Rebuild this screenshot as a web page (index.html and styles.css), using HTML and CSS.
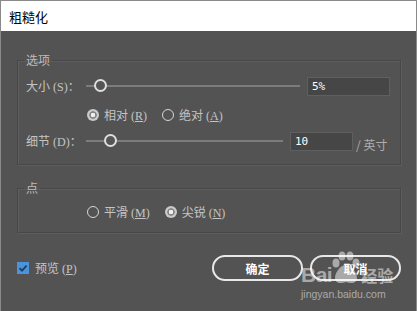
FILE: index.html
```html
<!DOCTYPE html>
<html>
    <head>
        <meta charset="utf-8">
        <title>粗糙化</title>
        <link rel="stylesheet" href="styles.css">
    </head>
    <body>
        <div class="dialog">
            <div class="titlebar">粗糙化</div>
            <div class="content">
                <fieldset class="group group-options">
                    <legend>选项</legend>
                    <div class="row row-size">
                        <span class="label">大小 (S)：</span>
                        <div class="slider slider-size">
                            <span class="thumb"></span>
                        </div>
                        <div class="field field-size">5%</div>
                    </div>
                    <div class="row row-radio">
                        <label class="radio-item"><span class="radio on"></span><span>相对 (<u>R</u>)</span></label>
                        <label class="radio-item"><span class="radio"></span><span>绝对 (<u>A</u>)</span></label>
                    </div>
                    <div class="row row-detail">
                        <span class="label">细节 (D)：</span>
                        <div class="slider slider-detail">
                            <span class="thumb"></span>
                        </div>
                        <div class="field field-detail">10</div>
                        <span class="unit">/ 英寸</span>
                    </div>
                </fieldset>

                <fieldset class="group group-points">
                    <legend>点</legend>
                    <div class="row row-radio">
                        <label class="radio-item"><span class="radio"></span><span>平滑 (<u>M</u>)</span></label>
                        <label class="radio-item"><span class="radio on"></span><span>尖锐 (<u>N</u>)</span></label>
                    </div>
                </fieldset>

                <div class="footer">
                    <label class="check-item">
                        <span class="checkbox">
                            <svg width="12" height="12" viewBox="0 0 12 12">
                                <path d="M2.5 6.2 L5 8.6 L9.6 3.6" fill="none" stroke="#223d5e" stroke-width="1.8"/>
                            </svg>
                        </span>
                        <span>预览 (<u>P</u>)</span>
                    </label>
                    <div class="buttons">
                        <a href="javascript:;" class="btn">确定</a>
                        <a href="javascript:;" class="btn">取消</a>
                    </div>
                </div>
            </div>

            <!-- 水印 -->
            <div class="watermark">
                <div class="wm-top">
                    <span class="wm-bai">Bai</span>
                    <svg class="wm-paw" width="30" height="34" viewBox="0 0 30 34">
                        <ellipse cx="6" cy="12" rx="3.5" ry="4.5"/>
                        <ellipse cx="12" cy="5" rx="3.5" ry="4.5"/>
                        <ellipse cx="20" cy="5" rx="3.5" ry="4.5"/>
                        <ellipse cx="26" cy="12" rx="3.5" ry="4.5"/>
                        <path d="M16 14 C10 14 5 22 5 27 C5 32 10 33 16 31 C22 33 27 32 27 27 C27 22 22 14 16 14 Z"/>
                    </svg>
                    <span class="wm-jy">经验</span>
                </div>
                <div class="wm-url">jingyan.baidu.com</div>
            </div>
        </div>
    </body>
</html>
```

FILE: styles.css
```css
*{
    margin: 0;
    padding: 0;
    box-sizing: border-box;
}
body{
    background-color: #535353;
    font-family: "Liberation Serif", "Noto Sans CJK SC", serif;
    font-size: 12px;
    color: #c4c4c4;
}
.dialog{
    width: 417px;
    height: 311px;
    border: 1px solid #8a8a8a;
    border-bottom: none;
    background-color: #535353;
    position: relative;
    overflow: hidden;
}
.titlebar{
    height: 30px;
    background-color: #fff;
    color: #000;
    font-family: "Noto Sans CJK SC", sans-serif;
    font-size: 13px;
    display: flex;
    align-items: center;
    padding-left: 8px;
}
.content{
    padding: 0 15px 0 16px;
}
.group{
    border: 1px solid #474747;
    box-shadow: 1px 1px 0 #5e5e5e, inset 1px 1px 0 #5e5e5e;
    padding: 0 9px 0 8px;
}
.group legend{
    padding: 0 2px;
    margin-left: -2px;
    line-height: 16px;
    font-family: "Noto Sans CJK SC", sans-serif;
    color: #bcbcbc;
}
.group-options{
    margin-top: 21px;
    padding-top: 8px;
    padding-bottom: 13px;
}
.group-points{
    margin-top: 15px;
    padding-top: 6px;
    padding-bottom: 10px;
}
.row{
    display: flex;
    align-items: center;
    height: 20px;
}
.row-radio{
    padding-left: 61px;
    gap: 15px;
}
.group-options .row-radio{
    margin-top: 9px;
}
.row-detail{
    margin-top: 6px;
}
.label{
    width: 60px;
    white-space: nowrap;
}
.slider{
    position: relative;
    height: 2px;
    background-color: #7c7c7c;
}
.slider-size{
    width: 214px;
}
.slider-detail{
    width: 197px;
}
.thumb{
    position: absolute;
    top: -6px;
    width: 13px;
    height: 13px;
    border-radius: 50%;
    border: 2.5px solid #dedede;
    background-color: #555;
}
.slider-size .thumb{
    left: 8px;
}
.slider-detail .thumb{
    left: 18px;
}
.field{
    height: 19px;
    margin-left: 7px;
    background-color: #464646;
    border: 1px solid #5f5f5f;
    color: #fff;
    font-family: "DejaVu Sans Mono", monospace;
    font-size: 11px;
    line-height: 17px;
    padding-left: 4px;
}
.field-size{
    width: 83px;
}
.field-detail{
    width: 63px;
}
.unit{
    margin-left: 3px;
    margin-top: 6px;
    color: #adadad;
    font-family: "Noto Sans CJK SC", sans-serif;
}
.radio-item{
    display: flex;
    align-items: center;
    gap: 5px;
    white-space: nowrap;
}
.radio{
    width: 12px;
    height: 12px;
    border-radius: 50%;
    border: 1.5px solid #d6d6d6;
}
.radio.on{
    border: none;
    background: radial-gradient(circle, #efefef 0, #efefef 2px, #808080 2.6px, #808080 3.4px, #cacaca 4px);
}
.footer{
    margin-top: 22px;
    display: flex;
    align-items: center;
    justify-content: space-between;
    height: 26px;
}
.check-item{
    display: flex;
    align-items: center;
    gap: 6px;
    margin-top: -1px;
}
.checkbox{
    width: 12px;
    height: 12px;
    background-color: #4a94de;
    display: flex;
}
.buttons{
    display: flex;
    gap: 7px;
}
.btn{
    width: 91px;
    height: 26px;
    border: 2px solid #e8e8e8;
    border-radius: 13px;
    color: #fff;
    text-decoration: none;
    font-family: "Noto Sans CJK SC", sans-serif;
    font-size: 12px;
    font-weight: bold;
    display: flex;
    align-items: center;
    justify-content: center;
}
.watermark{
    position: absolute;
    left: 300px;
    top: 248px;
    color: rgba(255,255,255,0.5);
    font-family: "Liberation Sans", sans-serif;
}
.wm-top{
    display: flex;
    align-items: flex-end;
    height: 36px;
}
.wm-bai{
    font-size: 21px;
    font-weight: bold;
    line-height: 20px;
    letter-spacing: -0.5px;
}
.wm-paw{
    fill: rgba(255,255,255,0.5);
    margin-left: -2px;
}
.wm-jy{
    font-family: "Noto Sans CJK SC", sans-serif;
    font-size: 16px;
    font-weight: bold;
    line-height: 20px;
    margin-left: 1px;
}
.wm-url{
    font-size: 10.5px;
    line-height: 12px;
    margin-top: 3px;
}
```
